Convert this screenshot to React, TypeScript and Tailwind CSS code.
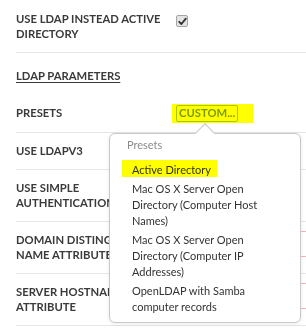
import React from "react";

function Checkbox({ className = "" }: { className?: string }) {
  return (
    <span
      className={
        "flex h-[12px] w-[12px] items-center justify-center rounded-[2px] border border-[#a6a6a6] bg-[#e4e4e4] " +
        className
      }
    >
      <svg width="9" height="9" viewBox="0 0 9 9" fill="none">
        <path d="M1.2 4.8 L3.4 7 L7.8 1.6" stroke="#333" strokeWidth="1.8" strokeLinecap="round" strokeLinejoin="round" />
      </svg>
    </span>
  );
}

function Row({ label, children, first = false }: { label: string; children?: React.ReactNode; first?: boolean }) {
  return (
    <div className={"flex border-b border-[#e6e6e6] " + (first ? "pt-[12px] pb-[11px]" : "py-[11px]")}>
      <div className="w-[152px] shrink-0 text-[11.25px] font-bold uppercase leading-[14.5px] text-[#3a3a3a]">{label}</div>
      <div className="ml-[8px] flex flex-1">{children}</div>
    </div>
  );
}

export default function App() {
  const items = [
    "Active Directory",
    "Mac OS X Server Open Directory (Computer Host Names)",
    "Mac OS X Server Open Directory (Computer IP Addresses)",
    "OpenLDAP with Samba computer records",
  ];
  return (
    <div className="relative h-[329px] w-[306px] overflow-hidden bg-white font-['Lato',sans-serif]">
      <div className="pl-4">
        <Row label="Use LDAP instead Active Directory" first>
          <Checkbox className="mt-[3px]" />
        </Row>
        <div className="pt-[16px] pb-[11px] text-[11.25px] font-bold uppercase leading-[14.5px] text-[#3a3a3a]">
          <span className="underline underline-offset-[2px]">LDAP Parameters</span>
        </div>
        <div className="flex items-center border-b border-[#e6e6e6] py-[10px]">
          <div className="w-[152px] shrink-0 text-[11.25px] font-bold uppercase leading-[14.5px] text-[#3a3a3a]">Presets</div>
          <div className="relative ml-[8px]">
            <button className="flex h-[17px] items-center rounded-[2px] border border-[#a9c8ec] px-[2px] text-[11.25px] font-bold uppercase leading-[14.5px] text-[#7a9cc4]">
              Custom...
            </button>
            <span className="pointer-events-none absolute -left-[4px] -top-[1px] h-[19px] w-[81px] bg-[#ffff00] mix-blend-multiply" />
          </div>
        </div>
        <Row label="Use LDAPv3">
          <Checkbox className="mt-[2px]" />
        </Row>
        <Row label="Use simple authentication">
          <Checkbox className="mt-[2px]" />
        </Row>
        <Row label="Domain distinguished name attribute">
          <div className="-mt-[2px] h-[26px] w-[200px] shrink-0 border border-[#f3b3b3] bg-white" />
        </Row>
        <Row label="Server hostname attribute">
          <div className="-mt-[2px] h-[26px] w-[200px] shrink-0 border border-[#f3b3b3] bg-white" />
        </Row>
      </div>

      <div className="absolute left-[109px] top-[133px] h-[190px] w-[192px] rounded-[6px] border border-[#c8c8c8] bg-white shadow-[0_1px_4px_rgba(0,0,0,0.08)]">
        <span className="absolute -top-[8px] left-[88px] h-[14px] w-[14px] rotate-45 border-l border-t border-[#c8c8c8] bg-white" />
        <div className="relative pt-[3px] pl-[17px] text-[11px] leading-[16px] text-[#8c8c8c]">Presets</div>
        <div className="relative mt-[9px] flex flex-col gap-[3px]">
          {items.map((t, i) => (
            <div key={t} className="pl-[22px] pr-[20px] text-[11px] leading-[16px] text-[#333]">
              {i === 0 ? (
                <span className="relative inline-block">
                  {t}
                  <span className="pointer-events-none absolute -left-[10px] -top-[2px] h-[17px] w-[95px] bg-[#ffff00] mix-blend-multiply" />
                </span>
              ) : (
                t
              )}
            </div>
          ))}
        </div>
      </div>
    </div>
  );
}
